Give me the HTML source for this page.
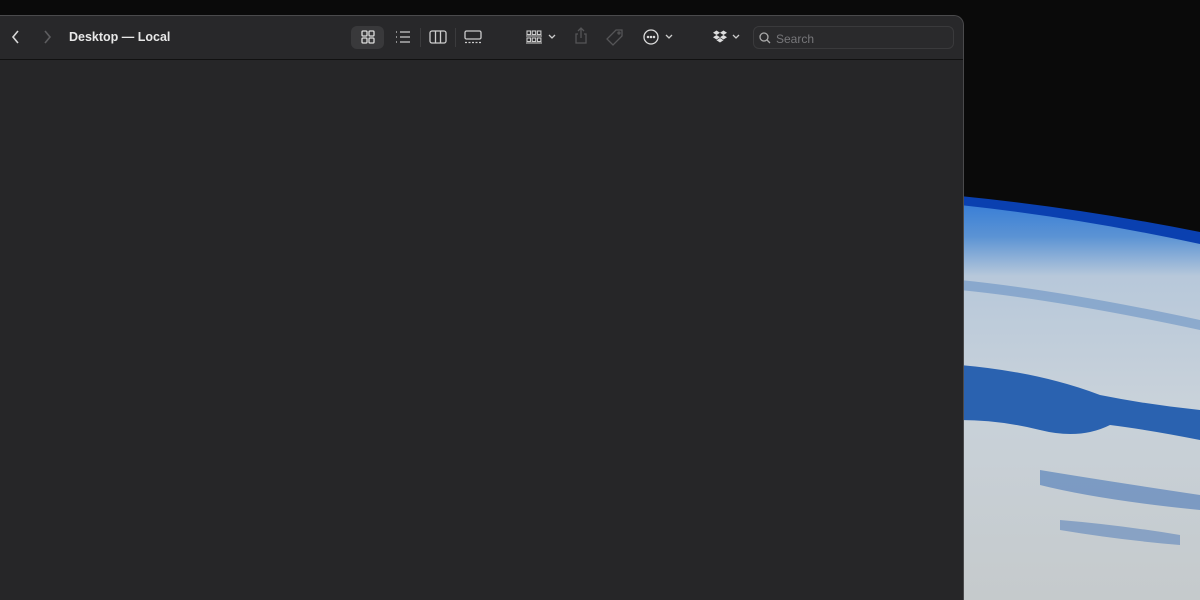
<!DOCTYPE html>
<html style="overflow:hidden"><head><style>
html,body{margin:0;width:1200px;height:600px;overflow:hidden}
body{background:#0a0a0a;font-family:"Liberation Sans",sans-serif;position:relative}
#earth{position:absolute;left:0;top:0}
.win{position:absolute;left:-20px;top:15px;width:984px;height:585px;background:#262628;border:1px solid #4a4a4c;border-bottom:none;border-radius:0 10px 0 0;box-sizing:border-box}
.tb{position:absolute;left:0;top:0;width:100%;height:43px;border-bottom:1px solid #111;background:#28282a;border-radius:0 10px 0 0}
.t{position:absolute;left:88px;top:14px;color:#e8e8e8;font-weight:bold;font-size:12.5px}
svg.i{position:absolute}
.sel{position:absolute;left:370px;top:10px;width:33px;height:23px;background:#39393b;border-radius:6px}
.sep{position:absolute;top:12px;width:1px;height:19px;background:#3b3b3d}
.search{position:absolute;left:772px;top:10px;width:201px;height:23px;border:1px solid #3a3a3c;border-radius:6px;box-sizing:border-box;background:#2a2a2c}
.search span{position:absolute;left:22px;top:5px;font-size:12px;color:#77777a}
</style></head><body>
<svg id="earth" width="1200" height="600">
<defs>
<linearGradient id="cl" x1="0" y1="0" x2="0" y2="1"><stop offset="0" stop-color="#3a7fd6"/><stop offset="0.08" stop-color="#5b93d4"/><stop offset="0.18" stop-color="#b7c8da"/><stop offset="0.5" stop-color="#c9d2da"/><stop offset="1" stop-color="#c5cacc"/></linearGradient>
</defs>
<path d="M960 196 Q1080 208 1200 232 L1200 246 Q1080 220 960 206Z" fill="#0a40b0"/>
<path d="M960 205 Q1080 218 1200 244 L1200 600 L960 600Z" fill="url(#cl)"/>
<path d="M960 280 Q1060 290 1200 320 L1200 330 Q1060 300 960 290Z" fill="#5a88c0" opacity="0.5"/>
<path d="M960 365 Q1040 372 1100 395 Q1150 405 1200 410 L1200 440 Q1150 430 1110 425 Q1080 440 1040 430 Q1000 420 960 420Z" fill="#2a62b0"/>
<path d="M1040 470 Q1100 480 1200 495 L1200 510 Q1100 500 1040 485Z" fill="#4a78b8" opacity="0.6"/>
<path d="M1060 520 Q1120 525 1180 535 L1180 545 Q1120 540 1060 530Z" fill="#4a78b8" opacity="0.5"/>
</svg>
<div class="win">
<div class="tb">
<svg class="i" style="left:30px;top:13px" width="10" height="16"><path d="M7 2L2 8L7 14" stroke="#d8d8d8" stroke-width="1.6" fill="none"/></svg>
<svg class="i" style="left:61px;top:13px" width="10" height="16"><path d="M3 2L8 8L3 14" stroke="#5e5e60" stroke-width="1.6" fill="none"/></svg>
<div class="t">Desktop — Local</div>
<div class="sel"></div>
<svg class="i" style="left:380px;top:14px" width="14" height="14" fill="none" stroke="#ddd" stroke-width="1.3"><rect x="1" y="1" width="5" height="5" rx="1"/><rect x="8" y="1" width="5" height="5" rx="1"/><rect x="1" y="8" width="5" height="5" rx="1"/><rect x="8" y="8" width="5" height="5" rx="1"/></svg>
<svg class="i" style="left:414px;top:14px" width="16" height="14" stroke="#ccc" stroke-width="1.3"><path d="M5 2H15M5 7H15M5 12H15"/><path d="M1 2H2M1 7H2M1 12H2"/></svg>
<div class="sep" style="left:439px"></div>
<svg class="i" style="left:448px;top:14px" width="18" height="14" fill="none" stroke="#ccc" stroke-width="1.3"><rect x="1" y="1" width="16" height="12" rx="2"/><path d="M6.5 1V13M11.5 1V13"/></svg>
<div class="sep" style="left:474px"></div>
<svg class="i" style="left:483px;top:14px" width="18" height="14" fill="none" stroke="#ccc" stroke-width="1.3"><rect x="1" y="1" width="16" height="8" rx="1.5"/><path d="M1 12.5H17" stroke-dasharray="2 1.5"/></svg>
<svg class="i" style="left:545px;top:14px" width="16" height="14" fill="none" stroke="#ccc" stroke-width="1.1"><rect x="1" y="1" width="3.5" height="3.5"/><rect x="6.2" y="1" width="3.5" height="3.5"/><rect x="11.4" y="1" width="3.5" height="3.5"/><rect x="1" y="8" width="3.5" height="3.5"/><rect x="6.2" y="8" width="3.5" height="3.5"/><rect x="11.4" y="8" width="3.5" height="3.5"/><path d="M0 6H16M0 13H16"/></svg>
<svg class="i" style="left:567px;top:18px" width="8" height="6"><path d="M1 1L4 4L7 1" stroke="#ccc" stroke-width="1.3" fill="none"/></svg>
<svg class="i" style="left:593px;top:11px" width="14" height="18" fill="none" stroke="#555557" stroke-width="1.3"><path d="M4 7H2V16H12V7H10M7 11V1M4 4L7 1L10 4"/></svg>
<svg class="i" style="left:624px;top:12px" width="20" height="18" fill="none" stroke="#555557" stroke-width="1.3"><path d="M11 2H17V8L8 17L2 11Z"/><circle cx="14" cy="5" r="1"/></svg>
<svg class="i" style="left:662px;top:13px" width="18" height="18" fill="none" stroke="#ddd" stroke-width="1.3"><circle cx="8" cy="8" r="7"/><circle cx="5" cy="8" r=".6" fill="#ddd"/><circle cx="8" cy="8" r=".6" fill="#ddd"/><circle cx="11" cy="8" r=".6" fill="#ddd"/></svg>
<svg class="i" style="left:684px;top:18px" width="8" height="6"><path d="M1 1L4 4L7 1" stroke="#ccc" stroke-width="1.3" fill="none"/></svg>
<svg class="i" style="left:732px;top:14px" width="14" height="13" fill="#ddd"><path d="M3.5 0.5L0 2.8L3.5 5L7 2.8ZM10.5 0.5L7 2.8L10.5 5L14 2.8ZM0 7.2L3.5 9.5L7 7.2L3.5 5ZM10.5 5L7 7.2L10.5 9.5L14 7.2ZM3.5 10.3L7 12.5L10.5 10.3L7 8Z"/></svg>
<svg class="i" style="left:751px;top:18px" width="8" height="6"><path d="M1 1L4 4L7 1" stroke="#ccc" stroke-width="1.3" fill="none"/></svg>
<div class="search"><svg class="i" style="left:5px;top:5px" width="12" height="12" fill="none" stroke="#aaa" stroke-width="1.3"><circle cx="5" cy="5" r="4"/><path d="M8 8L11 11"/></svg><span>Search</span></div>
</div>
</div>
</body></html>
